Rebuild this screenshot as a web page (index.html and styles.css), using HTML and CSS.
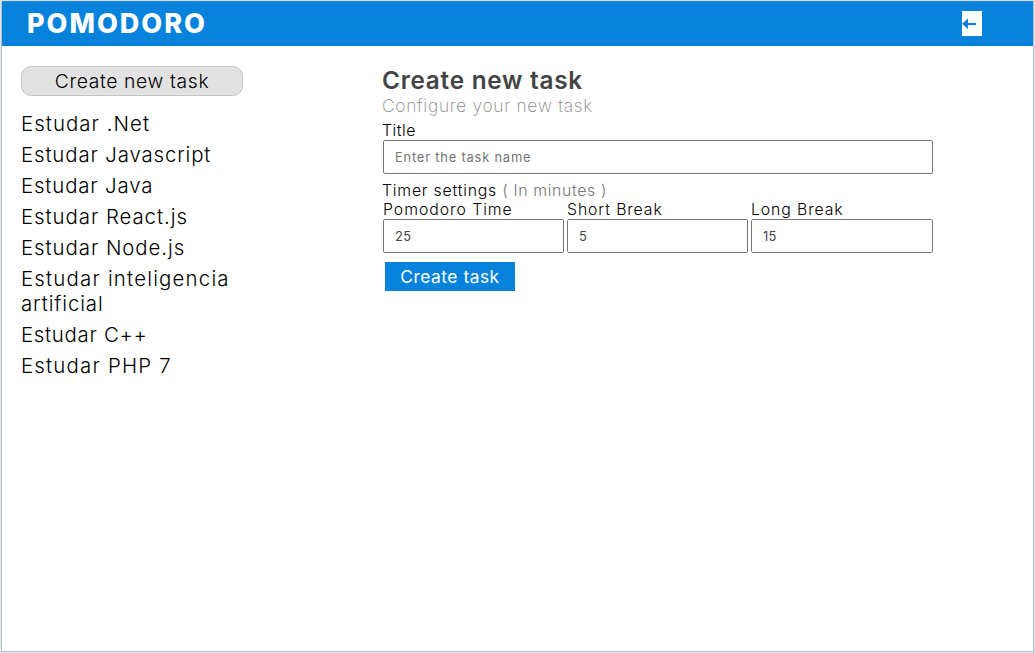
FILE: index.html
```
<!DOCTYPE html>
<html lang="en">
<head>
<meta charset="utf-8">
<title>Pomodoro</title>
<link rel="stylesheet" href="styles.css">
</head>
<body>
<div class="window">
  <header class="topbar">
    <h1 class="brand"><span>POMODORO</span></h1>
    <a class="logout" href="#" aria-label="Log out">
      <svg width="20" height="25" viewBox="0 0 20 25"><path fill="#fff" d="M0 0h20v25H0z"/><path fill="#0583dc" d="M0 12.8 6 7.5V12h8v2H6v4z"/></svg>
    </a>
  </header>
  <div class="layout">
    <aside class="sidebar">
      <button class="new-task"><span>Create new task</span></button>
      <ul class="tasks">
        <li class="t-net"><span>Estudar .Net</span></li>
        <li class="t-javascript"><span>Estudar Javascript</span></li>
        <li class="t-java"><span>Estudar Java</span></li>
        <li class="t-react"><span>Estudar React.js</span></li>
        <li class="t-node"><span>Estudar Node.js</span></li>
        <li class="t-ai"><span>Estudar inteligencia <span class="t-ai-end">artificial</span></span></li>
        <li class="t-cpp"><span>Estudar C++</span></li>
        <li class="t-php"><span>Estudar PHP 7</span></li>
      </ul>
    </aside>
    <main class="content">
      <h2 class="heading"><span>Create new task</span></h2>
      <p class="subtitle"><span>Configure your new task</span></p>
      <label class="label title-label" for="title"><span>Title</span></label>
      <input class="field title-field" id="title" placeholder="Enter the task name">
      <p class="label settings"><span>Timer settings</span> <span class="hint">( In minutes )</span></p>
      <div class="timers">
        <div><label class="label pomodoro-label" for="pomodoro"><span>Pomodoro Time</span></label><input class="field" id="pomodoro" value="25"></div>
        <div><label class="label break-label" for="short"><span>Short Break</span></label><input class="field" id="short" value="5"></div>
        <div><label class="label break-label" for="long"><span>Long Break</span></label><input class="field" id="long" value="15"></div>
      </div>
      <button class="submit"><span>Create task</span></button>
    </main>
  </div>
</div>
</body>
</html>
```
FILE: styles.css
```
* { box-sizing: border-box; margin: 0; padding: 0; }
body { font-family: Inter, "Open Sans", sans-serif; font-weight: 300; color: #000; background: #fff; }
button, input { font: inherit; }
.window { height: 653px; border: 1px solid #dce3ea; border-top-color: #d3e0ea; box-shadow: inset 1px 0 #b9c2cb, inset -1px -1px #bcc3d0; padding: 0 1px 1px; }
.topbar { height: 45px; background: #0583dc; border-top: 1px solid #2589cd; display: flex; justify-content: space-between; padding: 0 51px 0 25px; }
.brand { font-size: 27px; line-height: 44px; font-weight: 800; color: #fff; letter-spacing: 2px; white-space: nowrap; }
.logout { display: block; height: 25px; margin-top: 9px; }
.logout svg { display: block; }
.layout { display: flex; padding: 20px 0 0 19px; }
.sidebar { width: 222px; margin-right: 140px; }
.new-task { display: block; width: 222px; height: 30px; border: 1px solid #c4c4c4; border-radius: 10px; background: #e2e2e2; font-size: 19.3px; line-height: 28px; letter-spacing: 0.65px; white-space: nowrap; }
.tasks { list-style: none; margin-top: 15px; font-size: 20.4px; line-height: 25px; letter-spacing: 0.95px; }
.tasks li { margin-bottom: 6px; }
.t-javascript { letter-spacing: 0.87px; }
.t-net { letter-spacing: 1.05px; }
.t-php { letter-spacing: 1.2px; }
.t-ai { letter-spacing: 1.2px; }
.t-ai-end { letter-spacing: 0.9px; }
.t-java { letter-spacing: 0.85px; }
.t-cpp { letter-spacing: 0.7px; }
.content { width: 550px; }
.heading { font-size: 24.3px; line-height: 29px; font-weight: 600; color: #444; letter-spacing: 0.75px; margin-left: -1px; }
.subtitle { font-size: 17.4px; line-height: 24px; font-weight: 200; color: #888; letter-spacing: 0.7px; margin: -1px 0 0 -1px; }
.label { display: block; font-size: 15.8px; line-height: 19px; letter-spacing: 0.55px; white-space: nowrap; }
.title-label { margin: 3px 0 0 -1px; }
.settings { margin-left: -1px; letter-spacing: 0.8px; }
.pomodoro-label { letter-spacing: 0.97px; }
.break-label { letter-spacing: 0.9px; }
.field { display: block; width: 100%; height: 34px; padding: 0 11px; border: 1px solid #767676; border-radius: 2px; font-size: 12.9px; font-weight: 400; color: #444; letter-spacing: 0.3px; }
.field::placeholder { color: #757575; letter-spacing: 0.8px; }
.title-field { margin-bottom: 7px; }
.hint { color: #777; letter-spacing: 0.65px; }
.timers { display: grid; grid-template-columns: 181px 181px 182px; gap: 3px; }
.submit { display: block; width: 130px; height: 29px; margin: 9px 0 0 2px; border: 0; background: #0583dc; color: #fff; font-size: 17.4px; font-weight: 400; letter-spacing: 0.5px; white-space: nowrap; }
```
